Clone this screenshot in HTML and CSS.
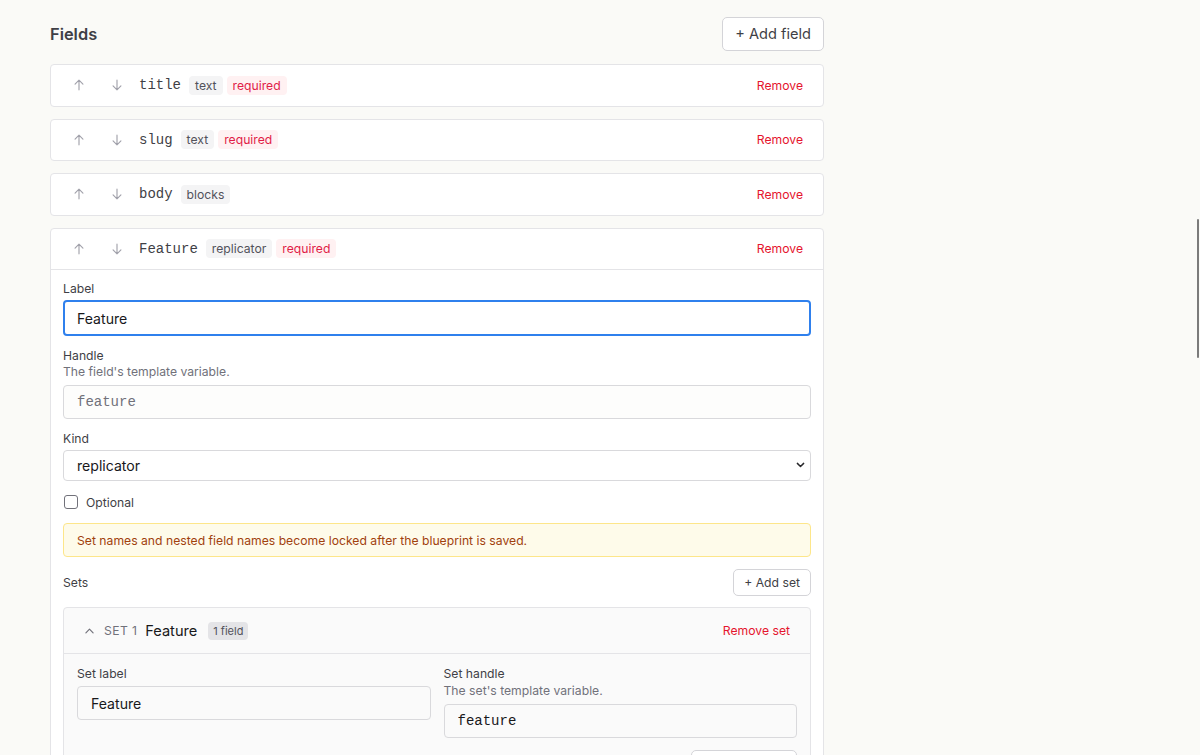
FILE: index.html
```html
<!DOCTYPE html>
<html lang="en">
<head>
<meta charset="UTF-8">
<meta name="viewport" content="width=device-width, initial-scale=1.0">
<title>Blueprint Fields</title>
<link rel="stylesheet" href="styles.css">
</head>
<body>
    <main class="page">
        <header class="page-head">
            <h1>Fields</h1>
            <button class="btn">+ Add field</button>
        </header>

        <section class="field-card">
            <div class="field-head">
                <button class="move" aria-label="Move up"><svg viewBox="0 0 16 16"><path d="M8 13.5V2.5M3.5 7 8 2.5 12.5 7"/></svg></button>
                <button class="move" aria-label="Move down"><svg viewBox="0 0 16 16"><path d="M8 2.5v11M3.5 9 8 13.5 12.5 9"/></svg></button>
                <span class="field-name">title</span>
                <span class="tag">text</span>
                <span class="tag tag-req">required</span>
                <button class="remove">Remove</button>
            </div>
        </section>

        <section class="field-card">
            <div class="field-head">
                <button class="move" aria-label="Move up"><svg viewBox="0 0 16 16"><path d="M8 13.5V2.5M3.5 7 8 2.5 12.5 7"/></svg></button>
                <button class="move" aria-label="Move down"><svg viewBox="0 0 16 16"><path d="M8 2.5v11M3.5 9 8 13.5 12.5 9"/></svg></button>
                <span class="field-name">slug</span>
                <span class="tag">text</span>
                <span class="tag tag-req">required</span>
                <button class="remove">Remove</button>
            </div>
        </section>

        <section class="field-card">
            <div class="field-head">
                <button class="move" aria-label="Move up"><svg viewBox="0 0 16 16"><path d="M8 13.5V2.5M3.5 7 8 2.5 12.5 7"/></svg></button>
                <button class="move" aria-label="Move down"><svg viewBox="0 0 16 16"><path d="M8 2.5v11M3.5 9 8 13.5 12.5 9"/></svg></button>
                <span class="field-name">body</span>
                <span class="tag">blocks</span>
                <button class="remove">Remove</button>
            </div>
        </section>

        <section class="field-card">
            <div class="field-head">
                <button class="move" aria-label="Move up"><svg viewBox="0 0 16 16"><path d="M8 13.5V2.5M3.5 7 8 2.5 12.5 7"/></svg></button>
                <button class="move" aria-label="Move down"><svg viewBox="0 0 16 16"><path d="M8 2.5v11M3.5 9 8 13.5 12.5 9"/></svg></button>
                <span class="field-name">Feature</span>
                <span class="tag">replicator</span>
                <span class="tag tag-req">required</span>
                <button class="remove">Remove</button>
            </div>

            <div class="field-body">
                <div class="group">
                    <label class="lbl" for="label">Label</label>
                    <input class="input input-focus" id="label" type="text" value="Feature">
                </div>

                <div class="group">
                    <label class="lbl" for="handle">Handle</label>
                    <div class="hint">The field's template variable.</div>
                    <input class="input input-mono input-muted" id="handle" type="text" value="feature" readonly>
                </div>

                <div class="group">
                    <label class="lbl" for="kind">Kind</label>
                    <div class="select-wrap">
                        <select class="select" id="kind">
                            <option>replicator</option>
                        </select>
                        <svg class="select-chev" viewBox="0 0 10 6"><path d="M1.5 1.2 5 4.6l3.5-3.4"/></svg>
                    </div>
                </div>

                <label class="check">
                    <span class="box"></span>
                    Optional
                </label>

                <div class="notice">Set names and nested field names become locked after the blueprint is saved.</div>

                <div class="sets-head">
                    <span class="lbl">Sets</span>
                    <button class="btn btn-sm">+ Add set</button>
                </div>

                <div class="set-card">
                    <div class="set-head">
                        <svg class="chev" viewBox="0 0 10 6"><path d="M1 5 5 1l4 4"/></svg>
                        <span class="set-num">SET 1</span>
                        <span class="set-name">Feature</span>
                        <span class="count">1 field</span>
                        <button class="remove">Remove set</button>
                    </div>
                    <div class="set-body">
                        <div class="set-grid">
                            <div>
                                <label class="lbl" for="setLabel">Set label</label>
                                <input class="input input-set" id="setLabel" type="text" value="Feature">
                            </div>
                            <div>
                                <label class="lbl" for="setHandle">Set handle</label>
                                <div class="hint">The set's template variable.</div>
                                <input class="input input-set input-mono" id="setHandle" type="text" value="feature">
                            </div>
                        </div>
                        <div class="set-actions">
                            <button class="btn btn-sm btn-wide">+ Add field</button>
                        </div>
                    </div>
                </div>
            </div>
        </section>
    </main>

    <div class="scroll-thumb"></div>
</body>
</html>
```

FILE: styles.css
```css
html {
    overflow: hidden;
    height: 100%;
}

body {
    margin: 0;
    background: #fafaf7;
    color: #27272a;
    font-family: 'Inter', 'Noto Sans', sans-serif;
}

button {
    font-family: inherit;
    cursor: pointer;
}

.page {
    width: 774px;
    padding: 17px 0 0 50px;
}

.page-head {
    display: flex;
    align-items: center;
    justify-content: space-between;
    margin-bottom: 13px;
}

h1 {
    margin: 0;
    font-size: 16.4px;
    font-weight: 600;
    color: #3f3f46;
}

.btn {
    height: 34px;
    padding: 0 12px;
    background: #fff;
    border: 1px solid #d4d4d8;
    border-radius: 5px;
    font-size: 14.6px;
    color: #3f3f46;
}

.btn-sm {
    height: 27px;
    padding: 0 10px;
    font-size: 12.2px;
}

.btn-wide {
    width: 106px;
}

/* field cards */
.field-card {
    background: #fff;
    border: 1px solid #e4e4e7;
    border-radius: 4px;
    margin-bottom: 12px;
}

.field-head {
    display: flex;
    align-items: center;
    height: 40.5px;
    padding: 0 20px;
}

.field-card .field-head + .field-body {
    border-top: 1px solid #e4e4e7;
}

.move {
    display: flex;
    align-items: center;
    justify-content: center;
    width: 16px;
    height: 20px;
    padding: 0;
    margin-right: 22px;
    background: none;
    border: none;
}

.move + .move {
    margin-right: 14px;
}

.move svg {
    width: 14px;
    height: 14px;
    fill: none;
    stroke: #a1a1aa;
    stroke-width: 1.3;
    stroke-linecap: round;
    stroke-linejoin: round;
}

.field-name {
    font-family: 'Liberation Mono', monospace;
    font-size: 14px;
    color: #3f3f46;
    margin-right: 8px;
}

.tag {
    display: inline-block;
    height: 19px;
    line-height: 19px;
    padding: 0 6px;
    margin-right: 4px;
    border-radius: 4px;
    background: #f4f4f5;
    color: #52525b;
    font-size: 12.2px;
}

.tag-req {
    background: #fff1f2;
    color: #e11d48;
}

.remove {
    margin-left: auto;
    padding: 0;
    background: none;
    border: none;
    font-size: 12.2px;
    color: #e5152e;
}

/* expanded field */
.field-body {
    padding: 11px 12px 20px;
}

.group {
    margin-bottom: 12px;
}

.lbl {
    display: block;
    font-size: 12.2px;
    line-height: 16px;
    color: #3f3f46;
    margin-bottom: 3px;
}

.hint {
    font-size: 12.2px;
    line-height: 16px;
    color: #71717a;
    margin: -3px 0 5px;
}

.input {
    display: block;
    box-sizing: border-box;
    width: 100%;
    height: 34px;
    padding: 0 13px;
    background: #fff;
    border: 1px solid #d9d9dc;
    border-radius: 4px;
    font-family: inherit;
    font-size: 14.1px;
    color: #18181b;
    outline: none;
}

.input-focus {
    height: 36px;
    border: 2px solid #2f80ed;
    padding: 0 12px;
}

.input-mono {
    font-family: 'Liberation Mono', monospace;
    font-size: 14px;
}

.input-muted {
    background: #fdfdfc;
    color: #71717a;
}

.select-wrap {
    position: relative;
}

.select {
    display: block;
    box-sizing: border-box;
    width: 100%;
    height: 31px;
    padding: 0 13px;
    appearance: none;
    background: #fff;
    border: 1px solid #d9d9dc;
    border-radius: 4px;
    font-family: inherit;
    font-size: 14.1px;
    color: #18181b;
}

.select-chev {
    position: absolute;
    top: 12px;
    right: 6px;
    width: 9px;
    height: 6px;
    fill: none;
    stroke: #27272a;
    stroke-width: 1.6;
    stroke-linecap: round;
    stroke-linejoin: round;
    pointer-events: none;
}

.check {
    display: flex;
    align-items: center;
    gap: 8px;
    height: 20px;
    margin: -1px 0 11px;
    font-size: 12.2px;
    color: #3f3f46;
}

.box {
    box-sizing: border-box;
    width: 14px;
    height: 14px;
    margin-left: 1px;
    border: 1px solid #71717a;
    border-radius: 3px;
    background: #fff;
}

.notice {
    box-sizing: border-box;
    height: 34px;
    padding: 0 13px;
    display: flex;
    align-items: center;
    background: #fefbea;
    border: 1px solid #fde68a;
    border-radius: 4px;
    font-size: 12.2px;
    color: #a1410d;
}

.sets-head {
    display: flex;
    align-items: center;
    justify-content: space-between;
    margin: 12px 0 11px;
}

.sets-head .lbl {
    margin: 0;
}

/* set card */
.set-card {
    background: #fafafa;
    border: 1px solid #e4e4e7;
    border-radius: 4px;
}

.set-head {
    display: flex;
    align-items: center;
    height: 45px;
    padding: 0 20px;
    border-bottom: 1px solid #e4e4e7;
}

.chev {
    width: 9px;
    height: 6px;
    margin: 0 10px 0 1px;
    fill: none;
    stroke: #71717a;
    stroke-width: 1.3;
    stroke-linecap: round;
    stroke-linejoin: round;
}

.set-num {
    font-size: 12.2px;
    color: #71717a;
    letter-spacing: 0.03em;
    margin-right: 8px;
}

.set-name {
    font-size: 14.6px;
    color: #18181b;
    margin-right: 11px;
}

.count {
    height: 18px;
    line-height: 18px;
    padding: 0 5px;
    border-radius: 4px;
    background: #e4e4e7;
    color: #52525b;
    font-size: 11px;
}

.set-body {
    padding: 12px 13px 20px;
}

.set-grid {
    display: grid;
    grid-template-columns: 1fr 1fr;
    gap: 13px;
}

.set-grid .lbl {
    margin-bottom: 4px;
}

.input-set {
    background: #fafafa;
}

.set-actions {
    display: flex;
    justify-content: flex-end;
    margin-top: 12px;
}

.scroll-thumb {
    position: fixed;
    top: 219px;
    right: 1px;
    width: 2px;
    height: 139px;
    border-radius: 1px;
    background: #7b7b7b;
}
```
